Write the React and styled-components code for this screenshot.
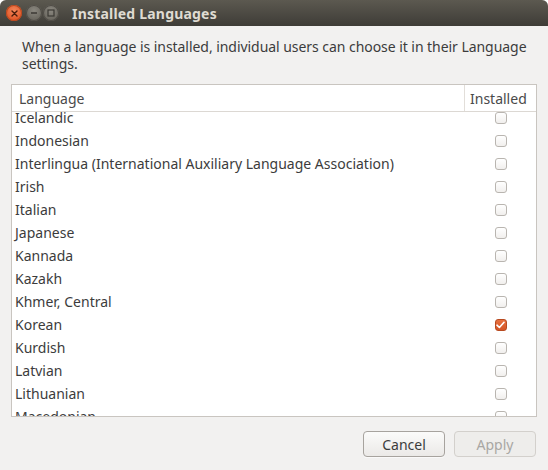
import React from 'react';
import styled, { createGlobalStyle, css } from 'styled-components';

const GlobalStyle = createGlobalStyle`
  html, body {
    margin: 0;
    padding: 0;
    background: #ffffff;
  }
  body {
    font-family: "Noto Sans", "DejaVu Sans", sans-serif;
  }
`;

const Window = styled.div`
  width: 548px;
  height: 470px;
  display: flex;
  flex-direction: column;
  background: #f2f1f0;
  border-radius: 6px 6px 0 0;
  overflow: hidden;
`;

const TitleBar = styled.div`
  height: 26px;
  flex: none;
  display: flex;
  align-items: center;
  padding-left: 6px;
  background: linear-gradient(#5c5950, #3e3c37);
`;

const WinButton = styled.div`
  width: 16px;
  height: 16px;
  border-radius: 50%;
  margin-right: ${p => p.gap}px;
  display: flex;
  align-items: center;
  justify-content: center;
  ${p => p.close
    ? css`
        background: radial-gradient(circle at 50% 35%, #f3865a, #e2592a 70%);
        box-shadow: inset 0 0 0 1px #b8481f;
      `
    : css`
        background: radial-gradient(circle at 50% 35%, #8a877f, #6a675f 70%);
        box-shadow: inset 0 0 0 1px #4f4c46;
      `}
`;

const Title = styled.div`
  font-weight: bold;
  font-size: 14px;
  color: #dfdbd2;
  letter-spacing: 0.2px;
  margin-left: 13px;
`;

const Content = styled.div`
  flex: 1;
  display: flex;
  flex-direction: column;
  padding: 12px 11px 13px 11px;
  min-height: 0;
`;

const Intro = styled.p`
  margin: 0 0 0 11px;
  font-size: 14px;
  line-height: 17px;
  letter-spacing: -0.05px;
  color: #3c3c3c;
`;

const Table = styled.div`
  margin-top: 12px;
  height: 334px;
  box-sizing: border-box;
  border: 1px solid #c9c5c0;
  background: #ffffff;
  display: flex;
  flex-direction: column;
  overflow: hidden;
`;

const HeaderRow = styled.div`
  height: 26px;
  flex: none;
  display: flex;
  border-bottom: 1px solid #dcd8d3;
  position: relative;
  z-index: 1;
  background: #ffffff;
`;

const HeaderCell = styled.div`
  display: flex;
  align-items: center;
  font-size: 14px;
  color: #4a4a4a;
  box-sizing: border-box;
  ${p => p.grow
    ? css`
        flex: 1;
        padding-left: 7px;
        border-right: 1px solid #e2ded9;
      `
    : css`
        width: 71px;
        padding-left: 5px;
      `}
`;

const Body = styled.div`
  flex: 1;
  overflow: hidden;
`;

const List = styled.div`
  margin-top: -6px;
`;

const Row = styled.div`
  height: 23px;
  display: flex;
  align-items: center;
`;

const LangName = styled.div`
  flex: 1;
  padding-left: 3px;
  font-size: 14px;
  color: #3c3c3c;
  white-space: nowrap;
`;

const CheckCell = styled.div`
  width: 71px;
  display: flex;
  justify-content: center;
  padding-left: 2px;
`;

const Box = styled.div`
  width: 12px;
  height: 12px;
  box-sizing: border-box;
  border-radius: 3px;
  display: flex;
  align-items: center;
  justify-content: center;
  ${p => p.checked
    ? css`
        background: linear-gradient(#e8703f, #d45526);
        border: 1px solid #b84a20;
      `
    : css`
        background: linear-gradient(#ffffff, #f1efed);
        border: 1px solid #b9b5b0;
      `}
`;

const Footer = styled.div`
  display: flex;
  justify-content: flex-end;
  gap: 9px;
  margin-top: 14px;
  padding-right: 1px;
`;

const Button = styled.div`
  width: 82px;
  height: 26px;
  box-sizing: border-box;
  border-radius: 4px;
  display: flex;
  align-items: center;
  justify-content: center;
  font-size: 14px;
  ${p => p.disabled
    ? css`
        color: #a9a7a3;
        border: 1px solid #d3d0cc;
        background: #eeedeb;
      `
    : css`
        color: #3c3c3c;
        border: 1px solid #a7a39e;
        background: linear-gradient(#fbfbfa, #ebe9e7);
        box-shadow: 0 1px 0 rgba(255, 255, 255, 0.6);
      `}
`;

const languages = [
  ['Icelandic', false],
  ['Indonesian', false],
  ['Interlingua (International Auxiliary Language Association)', false],
  ['Irish', false],
  ['Italian', false],
  ['Japanese', false],
  ['Kannada', false],
  ['Kazakh', false],
  ['Khmer, Central', false],
  ['Korean', true],
  ['Kurdish', false],
  ['Latvian', false],
  ['Lithuanian', false],
  ['Macedonian', false],
];

const App = () => (
  <>
    <GlobalStyle />
    <Window>
      <TitleBar>
        <WinButton close gap={4}>
          <svg width="7" height="7" viewBox="0 0 7 7">
            <path d="M1 1L6 6M6 1L1 6" stroke="#4a1c0a" strokeWidth="1.4" strokeLinecap="round" />
          </svg>
        </WinButton>
        <WinButton gap={1}>
          <svg width="8" height="8" viewBox="0 0 8 8">
            <path d="M1 4H7" stroke="#3b3934" strokeWidth="1.3" />
          </svg>
        </WinButton>
        <WinButton gap={0}>
          <svg width="8" height="8" viewBox="0 0 8 8">
            <rect x="1" y="1" width="6" height="6" fill="none" stroke="#3b3934" strokeWidth="1.2" />
          </svg>
        </WinButton>
        <Title>Installed Languages</Title>
      </TitleBar>
      <Content>
        <Intro>
          When a language is installed, individual users can choose it in their Language settings.
        </Intro>
        <Table>
          <HeaderRow>
            <HeaderCell grow>Language</HeaderCell>
            <HeaderCell>Installed</HeaderCell>
          </HeaderRow>
          <Body>
            <List>
              {languages.map(([name, checked]) => (
                <Row key={name}>
                  <LangName>{name}</LangName>
                  <CheckCell>
                    <Box checked={checked}>
                      {checked && (
                        <svg width="9" height="8" viewBox="0 0 9 8">
                          <path d="M1 4.2L3.4 6.5L8 1.3" fill="none" stroke="#ffffff" strokeWidth="1.6" strokeLinecap="round" strokeLinejoin="round" />
                        </svg>
                      )}
                    </Box>
                  </CheckCell>
                </Row>
              ))}
            </List>
          </Body>
        </Table>
        <Footer>
          <Button>Cancel</Button>
          <Button disabled>Apply</Button>
        </Footer>
      </Content>
    </Window>
  </>
);

export default App;
